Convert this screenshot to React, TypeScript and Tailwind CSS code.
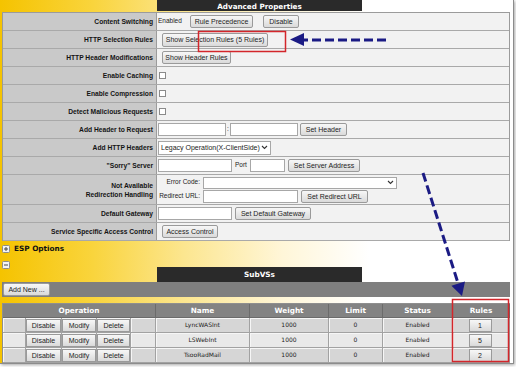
import { clsx } from "clsx";
import type { ReactNode } from "react";

const BTN =
  "flex shrink-0 items-center justify-center h-[13px] rounded-[2px] border border-[#9a9a9a] bg-[linear-gradient(#f7f7f7,#dadada)] font-['Liberation_Sans',Arial,sans-serif] text-[7px] leading-none text-[#1e1e1e] whitespace-nowrap";
const INPUT = "shrink-0 h-[13px] border border-[#a7a7a7] bg-white";
const SMALL = "font-['Liberation_Sans',Arial,sans-serif] text-[6.5px] leading-none text-[#222] whitespace-nowrap";
const HEAD = "font-['DejaVu_Sans',Verdana,sans-serif] font-bold leading-none whitespace-nowrap";

const SUBVS = [
  { name: "LyncWASInt", weight: 1000, limit: 0, status: "Enabled", rules: 1 },
  { name: "LSWebInt", weight: 1000, limit: 0, status: "Enabled", rules: 5 },
  { name: "TsooRadMail", weight: 1000, limit: 0, status: "Enabled", rules: 2 },
];

function Row({ label, tall, children }: { label: ReactNode; tall?: boolean; children?: ReactNode }) {
  return (
    <div className={clsx("flex border-b border-[#a9a9a9]", tall ? "h-[30px]" : "h-[18px]")}>
      <div className="w-[154px] shrink-0 flex items-center justify-end pr-[3px] text-right bg-[#c9c9c9] border-r border-[#9b9b9b] font-['Liberation_Sans',Arial,sans-serif] font-bold text-[6.7px] leading-[9px] text-[#141414]">
        {label}
      </div>
      <div className="flex-1 flex items-center bg-[#f2f2f2]">{children}</div>
    </div>
  );
}

function Checkbox() {
  return <div className="ml-[2px] w-[7px] h-[7px] border border-[#8a8a8a] bg-white" />;
}

function Chevron() {
  return (
    <svg width="7" height="5" viewBox="0 0 7 5" className="shrink-0">
      <path d="M1 1l2.5 2.5L6 1" fill="none" stroke="#333" strokeWidth="1.1" />
    </svg>
  );
}

function ToggleIcon({ plus }: { plus?: boolean }) {
  return (
    <svg width="8" height="8" viewBox="0 0 8 8" className="shrink-0">
      <rect x="0.5" y="0.5" width="7" height="7" rx="1" fill="#f4f4f4" stroke="#8c8c8c" />
      <path d="M2 4h4" stroke="#444" strokeWidth="1" />
      {plus && <path d="M4 2v4" stroke="#444" strokeWidth="1" />}
    </svg>
  );
}

function Annotations() {
  return (
    <svg className="absolute inset-0 pointer-events-none" width="516" height="367" viewBox="0 0 516 367">
      <rect x="198.5" y="31.5" width="87" height="20" fill="none" stroke="#d3262b" strokeWidth="1.5" />
      <rect x="452.5" y="299.5" width="56" height="62" fill="none" stroke="#d3262b" strokeWidth="1.5" />
      <line x1="386" y1="40" x2="302" y2="40" stroke="#1b1b84" strokeWidth="3" strokeDasharray="9 4" />
      <polygon points="290,39.5 304,33 304,46" fill="#1b1b84" />
      <line x1="423" y1="173" x2="458" y2="283" stroke="#1b1b84" strokeWidth="3" strokeDasharray="9 4" />
      <polygon points="462,296 465,281.5 451.4,285.7" fill="#1b1b84" />
    </svg>
  );
}

export default function App() {
  const cell = "flex items-center justify-center border-r border-b border-[#a2a2a2] shadow-[inset_1px_1px_0_#f6f6f6]";
  const hcell = "flex items-center justify-center h-[14px] bg-[#838383] border-r border-b border-[#6b6b6b] text-white text-[7.3px]";
  const txt = "font-['DejaVu_Sans',Verdana,sans-serif] text-[6px] leading-none text-[#222]";

  return (
    <div className="relative w-[516px] h-[367px] bg-white overflow-hidden">
      <div className="w-[514px] h-[364px] border-r border-b border-[#8c8c8c] shadow-[1px_1px_3px_rgba(0,0,0,0.35)] bg-[linear-gradient(90deg,#f5c300_0%,#f9d43c_18%,#fce690_36%,#fff6d8_55%,#ffffff_72%)]">
        {/* Advanced Properties */}
        <div className="h-[12px] pl-[157px]">
          <div className={clsx(HEAD, "w-[205px] h-[11px] bg-[#2a2a2a] text-white text-[7.2px] flex items-end justify-center pb-[1px]")}>
            Advanced Properties
          </div>
        </div>

        <div className="ml-[2px] w-[508px] border-t border-l border-r border-[#9b9b9b]">
          <Row label="Content Switching">
            <span className={clsx(SMALL, "ml-[1px] w-[32px] text-[6.3px]")}>Enabled</span>
            <div className={clsx(BTN, "w-[63px]")}>Rule Precedence</div>
            <div className={clsx(BTN, "ml-[10px] w-[36px]")}>Disable</div>
          </Row>
          <Row label="HTTP Selection Rules">
            <div className={clsx(BTN, "ml-[5px] w-[106px] h-[14px]")}>Show Selection Rules (5 Rules)</div>
          </Row>
          <Row label="HTTP Header Modifications">
            <div className={clsx(BTN, "ml-[5px] w-[69px]")}>Show Header Rules</div>
          </Row>
          <Row label="Enable Caching">
            <Checkbox />
          </Row>
          <Row label="Enable Compression">
            <Checkbox />
          </Row>
          <Row label="Detect Malicious Requests">
            <Checkbox />
          </Row>
          <Row label="Add Header to Request">
            <div className={clsx(INPUT, "ml-[1px] w-[68px]")} />
            <span className={clsx(SMALL, "w-[4px] text-center")}>:</span>
            <div className={clsx(INPUT, "w-[68px]")} />
            <div className={clsx(BTN, "ml-[2px] w-[47px]")}>Set Header</div>
          </Row>
          <Row label="Add HTTP Headers">
            <div className="ml-[1px] w-[113px] h-[14px] flex items-center justify-between pl-[2px] pr-[2px] border border-[#a7a7a7] bg-white">
              <span className="font-['Liberation_Sans',Arial,sans-serif] text-[7px] leading-none text-[#222] whitespace-nowrap">
                Legacy Operation(X-ClientSide)
              </span>
              <Chevron />
            </div>
          </Row>
          <Row label={'"Sorry" Server'}>
            <div className={clsx(INPUT, "ml-[1px] w-[74px]")} />
            <span className={clsx(SMALL, "ml-[3px] w-[15px]")}>Port</span>
            <div className={clsx(INPUT, "w-[35px]")} />
            <div className={clsx(BTN, "ml-[3px] w-[72px]")}>Set Server Address</div>
          </Row>
          <Row
            tall
            label={
              <span>
                Not Available
                <br />
                Redirection Handling
              </span>
            }
          >
            <div className="flex flex-col gap-[2px]">
              <div className="flex items-center h-[12px]">
                <span className={clsx(SMALL, "w-[46px] pr-[3px] text-right")}>Error Code:</span>
                <div className="w-[194px] h-[12px] flex items-center justify-end pr-[2px] border border-[#a7a7a7] bg-white">
                  <Chevron />
                </div>
              </div>
              <div className="flex items-center h-[12px]">
                <span className={clsx(SMALL, "w-[46px] pr-[3px] text-right")}>Redirect URL:</span>
                <div className={clsx(INPUT, "w-[95px] h-[12px]")} />
                <div className={clsx(BTN, "ml-[3px] w-[67px] h-[12px]")}>Set Redirect URL</div>
              </div>
            </div>
          </Row>
          <Row label="Default Gateway">
            <div className={clsx(INPUT, "ml-[1px] w-[74px]")} />
            <div className={clsx(BTN, "ml-[3px] w-[76px]")}>Set Default Gateway</div>
          </Row>
          <Row label="Service Specific Access Control">
            <div className={clsx(BTN, "ml-[5px] w-[56px]")}>Access Control</div>
          </Row>
        </div>

        {/* ESP Options */}
        <div className="h-[16px] flex items-center pl-[2px]">
          <ToggleIcon plus />
          <span className={clsx(HEAD, "ml-[4px] text-[7.3px] text-[#111]")}>ESP Options</span>
        </div>

        {/* SubVSs */}
        <div className="h-[25px] flex pl-[2px]">
          <div className="mt-[4px]">
            <ToggleIcon />
          </div>
          <div className={clsx(HEAD, "ml-[147px] self-end w-[205px] h-[15px] bg-[#2a2a2a] text-white text-[7.3px] flex items-center justify-center")}>
            SubVSs
          </div>
        </div>

        <div className="ml-[2px] w-[508px] h-[15px] flex items-center bg-[#7f7f7f]">
          <div className={clsx(BTN, "ml-[1px] w-[47px]")}>Add New ...</div>
        </div>

        <div className="h-[6px]" />

        <div className="ml-[2px] w-[508px] border-t border-l border-[#8f8f8f] grid grid-cols-[23px_36px_35px_34px_25px_94px_79px_54px_70px_57px]">
          <div className={clsx(HEAD, hcell, "col-span-5")}>Operation</div>
          <div className={clsx(HEAD, hcell)}>Name</div>
          <div className={clsx(HEAD, hcell)}>Weight</div>
          <div className={clsx(HEAD, hcell)}>Limit</div>
          <div className={clsx(HEAD, hcell)}>Status</div>
          <div className={clsx(HEAD, hcell)}>Rules</div>

          {SUBVS.map((s, i) => {
            const bg = i % 2 === 1 ? "bg-[#e9e9e9]" : "bg-[#d6d6d6]";
            const rowCell = clsx(cell, bg, "h-[15px]");
            const opBtn = clsx(BTN, "w-full h-[12px] mx-[1px] rounded-none bg-[linear-gradient(#efefef,#dcdcdc)]");
            return (
              <div key={s.name} className="contents">
                <div className={rowCell} />
                <div className={rowCell}>
                  <div className={opBtn}>Disable</div>
                </div>
                <div className={rowCell}>
                  <div className={opBtn}>Modify</div>
                </div>
                <div className={rowCell}>
                  <div className={opBtn}>Delete</div>
                </div>
                <div className={rowCell} />
                <div className={rowCell}>
                  <span className={txt}>{s.name}</span>
                </div>
                <div className={rowCell}>
                  <span className={txt}>{s.weight}</span>
                </div>
                <div className={rowCell}>
                  <span className={txt}>{s.limit}</span>
                </div>
                <div className={rowCell}>
                  <span className={txt}>{s.status}</span>
                </div>
                <div className={rowCell}>
                  <div className={clsx(BTN, "w-[23px] h-[12px] ml-[-2px] rounded-none")}>{s.rules}</div>
                </div>
              </div>
            );
          })}
        </div>
      </div>

      <Annotations />
    </div>
  );
}
